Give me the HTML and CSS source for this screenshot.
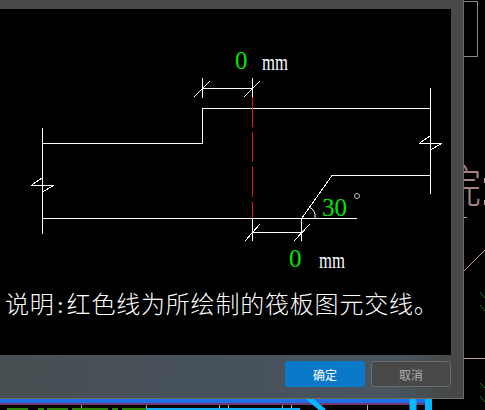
FILE: index.html
```html
<!DOCTYPE html>
<html lang="en">
<head>
    <meta charset="UTF-8">
    <title>筏板图元交线</title>
    <link rel="stylesheet" href="styles.css">
</head>
<body>

<!-- CAD drawing behind the dialog -->
<svg class="cad" width="485" height="410" viewBox="0 0 485 410">
    <path class="cad-grey" d="M463 1.5H477.5V56.5H463"/>
    <text class="cad-char" x="437" y="203">院</text>
    <path class="cad-pink" d="M463 272L485 250M463 358.5H485M463 217.5H467M484.500 178V183M484.500 200V205M81.5 398V410M146.5 398V410M219.5 398V410M228.5 398V410M282.5 398V410M291.5 398V410M367.5 398V410"/>
    <path class="cad-green" d="M480 292L485 298M480 305L485 311M480 383L485 388M480 396L485 402"/>
    <rect class="cad-blue" x="0" y="399" width="425" height="4"/>
    <rect class="cad-purple" x="0" y="403" width="425" height="2"/>
    <path class="cad-lime" d="M7 409H28M38 409H44M47 409H68M72 409H108M112 409H118M122 409H146"/>
    <path class="cad-cyan" d="M146 409H300"/>
    <path class="cad-diag" d="M306 396L324 411"/>
    <path class="cad-cyan-wide" d="M413 398V410M428.500 398V410"/>
</svg>

<div class="dialog">
    <div class="dialog-top"></div>
    <div class="dialog-body">
        <div class="canvas">
            <svg class="diagram" width="451" height="265" viewBox="0 9 451 265">
                <path class="line" d="M42.500 128V234M42 143.500H202.500V108.500H430.500M430.500 88V194M430.500 175.500H332L302 218M42 218.500H357"/>
                <path class="line" d="M31 185.500H54M31 185.500L42 178M42 192L54 185.500M419 143.500H442M419 143.500L430 136M430 150L442 143.500"/>
                <path class="line" d="M202.500 88.500H252.500M202.500 78V98M252.500 78V98M194 97L210 81M244 97L260 81"/>
                <path class="line" d="M252.500 232.500H301.500M252.500 218V241M301.500 218V241M245 241L260 224M294 241L310 224"/>
                <path class="arc" d="M309 207Q316 210 315 218"/>
                <path class="dash" d="M252.500 97V218"/>
                <text class="dim" x="235" y="69">0</text>
                <text class="unit" x="262" y="70" textLength="26" lengthAdjust="spacingAndGlyphs">mm</text>
                <text class="dim" x="322" y="216">30</text>
                <circle class="deg" cx="357" cy="196" r="2.500"/>
                <text class="dim" x="289" y="267">0</text>
                <text class="unit" x="319" y="268" textLength="26" lengthAdjust="spacingAndGlyphs">mm</text>
            </svg>
            <p class="note">说明<span class="colon">:</span>红色线为所绘制的筏板图元交线。</p>
        </div>
    </div>
    <div class="dialog-footer">
        <button class="btn btn-ok">确定</button>
        <button class="btn btn-cancel">取消</button>
    </div>
</div>

</body>
</html>
```

FILE: styles.css
```css
html, body {
    margin: 0;
    padding: 0;
}
body {
    width: 485px;
    height: 410px;
    overflow: hidden;
    background-color: #000000;
    font-family: "Noto Sans CJK SC", "Liberation Sans", sans-serif;
}
.cad {
    position: absolute;
    left: 0;
    top: 0;
}
.cad path {
    fill: none;
}
.cad-grey {
    stroke: #8a8a8a;
    stroke-width: 1;
}
.cad-char {
    font-family: "Noto Sans CJK SC", sans-serif;
    font-size: 44px;
    font-weight: 300;
    fill: #a5828a;
}
.cad-pink {
    stroke: #c79aa6;
    stroke-width: 1;
}
.cad-green {
    stroke: #0b7f0b;
    stroke-width: 1;
}
.cad-blue {
    fill: #1f6ee6;
}
.cad-purple {
    fill: #743a66;
}
.cad-lime {
    stroke: #2a8a08;
    stroke-width: 2;
}
.cad-cyan {
    stroke: #12aef0;
    stroke-width: 2;
}
.cad-diag {
    stroke: #05b8ff;
    stroke-width: 5;
}
.cad-cyan-wide {
    stroke: #05b8ff;
    stroke-width: 7;
}
.dialog {
    position: relative;
    display: flex;
    flex-direction: column;
    box-sizing: border-box;
    width: 464px;
    height: 399px;
    background-color: #464947;
    border-right: 1px solid #6b6d6c;
    border-bottom: 1px solid #6b6d6c;
}
.dialog-top {
    height: 9px;
}
.dialog-body {
    height: 346px;
}
.canvas {
    display: flex;
    flex-direction: column;
    width: 451px;
    height: 346px;
    background-color: #000000;
}
.diagram {
    display: block;
}
.line {
    fill: none;
    stroke: #ffffff;
    stroke-width: 1;
    shape-rendering: crispEdges;
}
.arc {
    fill: none;
    stroke: #ffffff;
    stroke-width: 1;
}
.dash {
    fill: none;
    stroke: #ee1122;
    stroke-width: 1;
    stroke-dasharray: 30 5;
    shape-rendering: crispEdges;
}
.dim {
    font-family: "Liberation Serif", serif;
    font-size: 25px;
    fill: #00e600;
}
.unit {
    font-family: "Liberation Serif", serif;
    font-size: 23px;
    fill: #f4f8ff;
}
.deg {
    fill: none;
    stroke: #b8c4d0;
    stroke-width: 1;
}
.note {
    margin: 0;
    padding: 17px 0 0 5px;
    font-family: "Liberation Serif", "Noto Sans CJK SC", serif;
    font-size: 24px;
    letter-spacing: 0.8px;
    line-height: 28px;
    font-weight: 300;
    color: #ffffff;
    white-space: nowrap;
}
.colon {
    display: inline-block;
    width: 12px;
    text-align: center;
}
.dialog-footer {
    display: flex;
    justify-content: flex-end;
    gap: 6px;
    box-sizing: border-box;
    height: 43px;
    padding: 6px 12px 0 0;
    background: linear-gradient(100deg, #484f52 0%, #47525d 55%, #49555f 85%, #464846 97%);
}
.btn {
    box-sizing: border-box;
    width: 80px;
    height: 26px;
    padding: 0;
    border-radius: 3px;
    font-family: "Noto Sans CJK SC", sans-serif;
    font-size: 12px;
}
.btn-ok {
    border: none;
    background-color: #0a7ac8;
    color: #ffffff;
}
.btn-cancel {
    border: 1px solid #6a6c6e;
    background-color: #484848;
    color: #aeaeae;
}
```
